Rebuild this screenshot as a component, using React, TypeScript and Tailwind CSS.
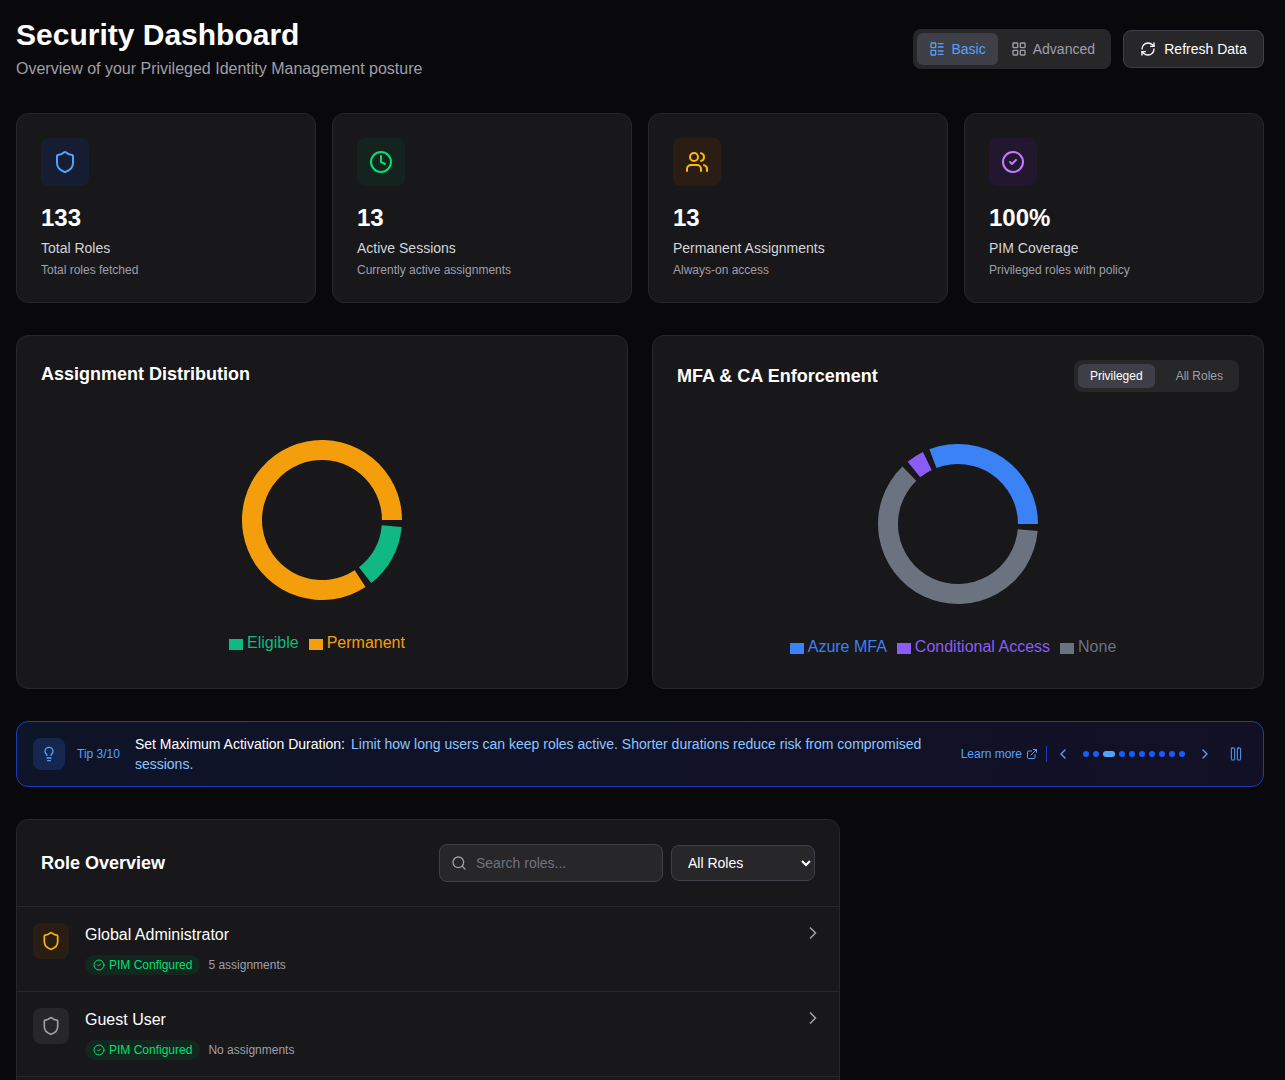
import { useState } from 'react'
import {
  CircleCheck,
  Clock,
  ExternalLink,
  ChevronLeft,
  ChevronRight,
  LayoutGrid,
  LayoutList,
  Lightbulb,
  Pause,
  RefreshCw,
  Search,
  Shield,
  Users,
} from 'lucide-react'

const stats = [
  { icon: Shield, value: '133', label: 'Total Roles', sub: 'Total roles fetched', box: 'bg-[#161d33]', color: 'text-blue-400' },
  { icon: Clock, value: '13', label: 'Active Sessions', sub: 'Currently active assignments', box: 'bg-[#15231f]', color: 'text-green-400' },
  { icon: Users, value: '13', label: 'Permanent Assignments', sub: 'Always-on access', box: 'bg-[#2a1e14]', color: 'text-amber-400' },
  { icon: CircleCheck, value: '100%', label: 'PIM Coverage', sub: 'Privileged roles with policy', box: 'bg-[#231730]', color: 'text-purple-400' },
]

const roles = [
  { name: 'Global Administrator', count: '5 assignments', box: 'bg-[#2a1e14]', color: 'text-amber-400' },
  { name: 'Guest User', count: 'No assignments', box: 'bg-zinc-800', color: 'text-zinc-400' },
]

function arc(start: number, end: number, outer = 80, inner = 60) {
  const pt = (r: number, a: number) => {
    const rad = (a * Math.PI) / 180
    return `${(80 + r * Math.cos(rad)).toFixed(2)} ${(80 - r * Math.sin(rad)).toFixed(2)}`
  }
  const large = end - start > 180 ? 1 : 0
  return `M${pt(outer, start)} A${outer} ${outer} 0 ${large} 0 ${pt(outer, end)} L${pt(inner, end)} A${inner} ${inner} 0 ${large} 1 ${pt(inner, start)} Z`
}

type Slice = { from: number; to: number; fill: string }
type LegendItem = { label: string; square: string; text: string }

function Donut({ slices, legend }: { slices: Slice[]; legend: LegendItem[] }) {
  return (
    <div className="flex h-64 flex-col items-center pt-9">
      <svg width="160" height="160" viewBox="0 0 160 160" className="shrink-0">
        {slices.map((s) => (
          <path key={s.fill} d={arc(s.from, s.to)} fill={s.fill} />
        ))}
      </svg>
      <div className="mt-[31px] flex h-6 items-center justify-center">
        {legend.map((l) => (
          <span key={l.label} className={`mr-2.5 flex items-center gap-1 text-base ${l.text}`}>
            <span className={`mt-0.5 h-[11px] w-3.5 ${l.square}`} />
            {l.label}
          </span>
        ))}
      </div>
    </div>
  )
}

export default function App() {
  const [mode, setMode] = useState('basic')
  const [scope, setScope] = useState('privileged')

  return (
    <div className="h-screen overflow-hidden bg-zinc-950 font-['Liberation_Sans',Arial,sans-serif] text-white">
      <div className="ml-4 w-[1248px] pt-4">
        {/* Header */}
        <header className="mb-8 flex h-[65px] items-center justify-between">
          <div>
            <h1 className="text-3xl font-bold">Security Dashboard</h1>
            <p className="mt-1 text-base text-zinc-400">Overview of your Privileged Identity Management posture</p>
          </div>
          <div className="flex items-center gap-3">
            <div className="flex h-10 items-center gap-px rounded-lg bg-zinc-800 p-1">
              <button
                type="button"
                onClick={() => setMode('basic')}
                className={`flex h-8 items-center gap-1.5 rounded-md px-3 text-sm ${mode === 'basic' ? 'bg-zinc-700 text-blue-400' : 'text-zinc-400'}`}
              >
                <LayoutList size={16} />
                Basic
              </button>
              <button
                type="button"
                onClick={() => setMode('advanced')}
                className={`flex h-8 items-center gap-1.5 rounded-md px-3 text-sm ${mode === 'advanced' ? 'bg-zinc-700 text-blue-400' : 'text-zinc-400'}`}
              >
                <LayoutGrid size={16} />
                Advanced
              </button>
            </div>
            <button
              type="button"
              className="flex h-[38px] w-[141px] items-center justify-center gap-2 rounded-lg border border-zinc-700 bg-zinc-800 text-sm font-medium text-white"
            >
              <RefreshCw size={16} />
              Refresh Data
            </button>
          </div>
        </header>

        {/* Stat cards */}
        <section className="mb-8 grid grid-cols-4 gap-4">
          {stats.map((s) => (
            <div key={s.label} className="rounded-xl border border-zinc-800 bg-zinc-900 p-6">
              <div className={`mb-4 flex h-12 w-12 items-center justify-center rounded-lg ${s.box} ${s.color}`}>
                <s.icon size={24} />
              </div>
              <div className="mb-1 text-2xl font-bold">{s.value}</div>
              <div className="text-sm text-zinc-300">{s.label}</div>
              <div className="mt-1 text-xs text-zinc-400">{s.sub}</div>
            </div>
          ))}
        </section>

        {/* Charts */}
        <section className="mb-8 grid grid-cols-2 gap-6">
          <div className="rounded-xl border border-zinc-800 bg-zinc-900 p-6">
            <h2 className="mb-4 text-lg font-bold">Assignment Distribution</h2>
            <Donut
              slices={[
                { from: 0, to: 303, fill: '#f59e0b' },
                { from: 308, to: 355, fill: '#10b981' },
              ]}
              legend={[
                { label: 'Eligible', square: 'bg-[#10b981]', text: 'text-[#10b981]' },
                { label: 'Permanent', square: 'bg-[#f59e0b]', text: 'text-[#f59e0b]' },
              ]}
            />
          </div>
          <div className="rounded-xl border border-zinc-800 bg-zinc-900 p-6">
            <div className="mb-4 flex items-center justify-between">
              <h2 className="text-lg font-bold">MFA &amp; CA Enforcement</h2>
              <div className="flex h-8 items-center gap-[9px] rounded-lg bg-zinc-800 p-1">
                <button
                  type="button"
                  onClick={() => setScope('privileged')}
                  className={`h-6 rounded-md px-3 text-xs font-medium ${scope === 'privileged' ? 'bg-zinc-700 text-white' : 'text-zinc-400'}`}
                >
                  Privileged
                </button>
                <button
                  type="button"
                  onClick={() => setScope('all')}
                  className={`h-6 rounded-md px-3 text-xs font-medium ${scope === 'all' ? 'bg-zinc-700 text-white' : 'text-zinc-400'}`}
                >
                  All Roles
                </button>
              </div>
            </div>
            <Donut
              slices={[
                { from: 0, to: 111, fill: '#3b82f6' },
                { from: 116, to: 129, fill: '#8b5cf6' },
                { from: 134, to: 355, fill: '#6b7280' },
              ]}
              legend={[
                { label: 'Azure MFA', square: 'bg-[#3b82f6]', text: 'text-[#3b82f6]' },
                { label: 'Conditional Access', square: 'bg-[#8b5cf6]', text: 'text-[#8b5cf6]' },
                { label: 'None', square: 'bg-[#6b7280]', text: 'text-[#6b7280]' },
              ]}
            />
          </div>
        </section>

        {/* Tip banner */}
        <section className="mb-8 flex items-center gap-3 rounded-xl border border-blue-800 bg-linear-to-r from-blue-950/40 to-indigo-950/40 px-4 py-3">
          <div className="flex h-8 w-8 shrink-0 items-center justify-center rounded-lg bg-[#15274f] text-blue-400">
            <Lightbulb size={16} />
          </div>
          <span className="mr-[3px] shrink-0 text-xs text-blue-400">Tip 3/10</span>
          <p className="min-w-0 flex-1 text-sm text-blue-300">
            <span className="mr-1.5 text-white">Set Maximum Activation Duration:</span>
            Limit how long users can keep roles active. Shorter durations reduce risk from compromised sessions.
          </p>
          <div className="ml-1 flex shrink-0 items-center text-blue-400">
            <a className="flex items-center gap-1 text-xs">
              Learn more
              <ExternalLink size={12} />
            </a>
            <span className="ml-2 h-4 w-px bg-blue-800" />
            <button type="button" className="ml-1 flex h-6 w-6 items-center justify-center">
              <ChevronLeft size={16} />
            </button>
            <div className="mx-2 flex items-center gap-1">
              {Array.from({ length: 10 }).map((_, i) => (
                <span key={i} className={i === 2 ? 'h-1.5 w-3 rounded-full bg-blue-400' : 'h-1.5 w-1.5 rounded-full bg-blue-600'} />
              ))}
            </div>
            <button type="button" className="flex h-6 w-6 items-center justify-center">
              <ChevronRight size={16} />
            </button>
            <button type="button" className="ml-[7px] -mr-px flex h-6 w-6 items-center justify-center">
              <Pause size={16} strokeWidth={1.5} />
            </button>
          </div>
        </section>

        {/* Role overview */}
        <section className="w-[824px] rounded-xl border border-zinc-800 bg-zinc-900">
          <div className="flex items-center justify-between border-b border-zinc-800 p-6">
            <h2 className="text-lg font-bold">Role Overview</h2>
            <div className="flex items-center gap-2">
              <div className="relative w-56">
                <Search size={16} className="absolute left-3 top-1/2 -translate-y-1/2 text-zinc-400" />
                <input
                  type="text"
                  placeholder="Search roles..."
                  className="h-[38px] w-full rounded-lg border border-zinc-700 bg-zinc-800 pl-9 pr-4 text-sm text-white placeholder:text-zinc-500"
                />
              </div>
              <select className="h-9 w-36 rounded-lg border border-zinc-700 bg-zinc-800 pl-3 text-sm text-white">
                <option>All Roles</option>
              </select>
            </div>
          </div>
          {roles.map((r) => (
            <div key={r.name} className="flex items-start gap-4 border-b border-zinc-800 p-4">
              <div className={`flex h-9 w-9 shrink-0 items-center justify-center rounded-lg ${r.box} ${r.color}`}>
                <Shield size={20} />
              </div>
              <div className="min-w-0 flex-1">
                <div className="mb-2 text-base">{r.name}</div>
                <div className="flex items-center gap-2">
                  <span className="flex h-5 items-center gap-1 rounded-full bg-[#12281f] px-2 text-xs text-green-400">
                    <CircleCheck size={12} />
                    PIM Configured
                  </span>
                  <span className="text-xs text-zinc-400">{r.count}</span>
                </div>
              </div>
              <ChevronRight size={20} className="shrink-0 text-zinc-400" />
            </div>
          ))}
          <div className="h-10" />
        </section>
      </div>
    </div>
  )
}
